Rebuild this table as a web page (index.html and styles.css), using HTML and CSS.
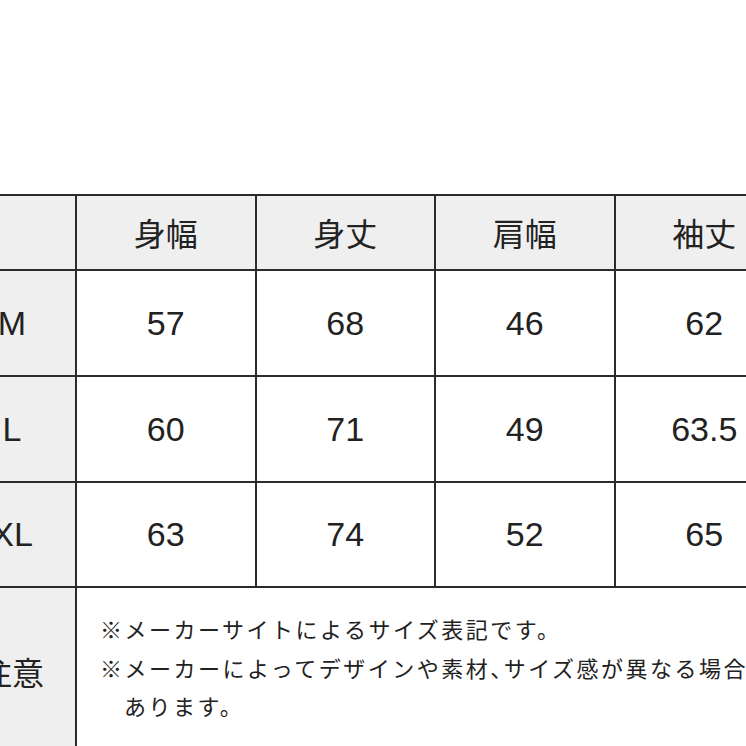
FILE: index.html
```html
<!DOCTYPE html>
<html lang="ja">
<head>
<meta charset="utf-8">
<link rel="stylesheet" href="styles.css">
</head>
<body>
<table class="size-table">
  <colgroup>
    <col class="col-label">
    <col class="col-data">
    <col class="col-data">
    <col class="col-data">
    <col class="col-data">
  </colgroup>
  <thead>
    <tr class="head-row">
      <th class="label"></th>
      <th>身幅</th>
      <th>身丈</th>
      <th>肩幅</th>
      <th>袖丈</th>
    </tr>
  </thead>
  <tbody>
    <tr class="data-row">
      <th class="label num">M</th>
      <td>57</td><td>68</td><td>46</td><td>62</td>
    </tr>
    <tr class="data-row">
      <th class="label num">L</th>
      <td>60</td><td>71</td><td>49</td><td>63.5</td>
    </tr>
    <tr class="data-row last-data">
      <th class="label num">XL</th>
      <td>63</td><td>74</td><td>52</td><td>65</td>
    </tr>
    <tr class="note-row">
      <th class="label note-label">注意</th>
      <td colspan="4" class="notes">
        <p class="note">※メーカーサイトによるサイズ表記です。</p>
        <p class="note">※メーカーによってデザインや素材<span class="half">、</span>サイズ感が異なる場合が<br>あります。</p>
      </td>
    </tr>
  </tbody>
</table>
</body>
</html>
```

FILE: styles.css
```css
html, body {
  margin: 0;
  padding: 0;
  background: #ffffff;
  overflow: hidden;
}

body {
  width: 746px;
  height: 746px;
  color: #222222;
  font-family: "Liberation Sans", "Noto Sans CJK JP", sans-serif;
}

.size-table {
  border-collapse: collapse;
  table-layout: fixed;
  width: 846px;
  margin-top: 194px;
  margin-left: -53px;
}

.col-label { width: 128px; }
.col-data { width: 179.5px; }

.size-table th,
.size-table td {
  border: 2px solid #2b2b2b;
  padding: 0;
  text-align: center;
  vertical-align: middle;
  font-weight: normal;
}

.size-table .head-row th {
  height: 71px;
  background: #efefef;
  font-family: "Noto Sans CJK JP", sans-serif;
  font-size: 32px;
  padding-top: 0;
  padding-bottom: 2px;
}

.size-table .label {
  background: #efefef;
  font-family: "Noto Sans CJK JP", sans-serif;
  font-size: 32px;
}

.size-table .label.num {
  font-family: "Liberation Sans", sans-serif;
  font-size: 34px;
}

.size-table .data-row td {
  height: 104px;
  font-size: 34px;
}

.size-table .last-data td {
  height: 103px;
}

.size-table .note-row th,
.size-table .note-row td {
  height: 158px;
}

.size-table .note-label {
  padding-bottom: 5px;
}

.size-table .notes {
  text-align: left;
  padding: 0 0 13px 23px;
}

.note {
  margin: 0;
  font-family: "Noto Sans CJK JP", sans-serif;
  font-size: 22px;
  letter-spacing: 2.5px;
  line-height: 38.5px;
  white-space: nowrap;
  padding-left: 24px;
  text-indent: -24px;
}

.half {
  font-feature-settings: "halt";
}
```
